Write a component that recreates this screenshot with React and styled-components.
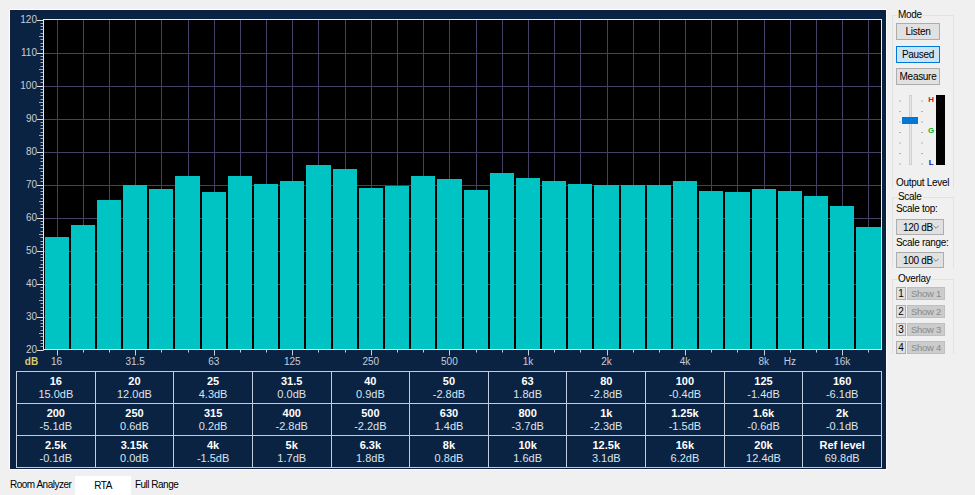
import React from "react";
import styled, { createGlobalStyle } from "styled-components";

const GlobalStyle = createGlobalStyle`
  body {
    margin: 0;
    background: #f0f0f0;
    font-family: "Liberation Sans", Arial, sans-serif;
    font-size: 10px;
    color: #000;
  }
`;

const NAVY = "#0b2343";
const BAR = "#00c4c4";
const GRID = "#463f63";
const AXIS_TEXT = "#c6cdd8";

const bars = [
  54.0, 57.6, 65.4, 69.8, 68.7, 72.5, 67.8, 72.5, 70.1, 71.0, 75.8, 74.8, 68.9,
  69.5, 72.5, 71.7, 68.2, 73.4, 72.0, 71.0, 70.3, 69.9, 69.7, 69.7, 71.0, 68.0,
  67.7, 68.7, 68.0, 66.6, 63.4, 57.1,
];

const xLabels = {
  0: "16", 3: "31.5", 6: "63", 9: "125", 12: "250", 15: "500",
  18: "1k", 21: "2k", 24: "4k", 27: "8k", 30: "16k",
};

const tableRows = [
  [["16", "15.0dB"], ["20", "12.0dB"], ["25", "4.3dB"], ["31.5", "0.0dB"], ["40", "0.9dB"], ["50", "-2.8dB"], ["63", "1.8dB"], ["80", "-2.8dB"], ["100", "-0.4dB"], ["125", "-1.4dB"], ["160", "-6.1dB"]],
  [["200", "-5.1dB"], ["250", "0.6dB"], ["315", "0.2dB"], ["400", "-2.8dB"], ["500", "-2.2dB"], ["630", "1.4dB"], ["800", "-3.7dB"], ["1k", "-2.3dB"], ["1.25k", "-1.5dB"], ["1.6k", "-0.6dB"], ["2k", "-0.1dB"]],
  [["2.5k", "-0.1dB"], ["3.15k", "0.0dB"], ["4k", "-1.5dB"], ["5k", "1.7dB"], ["6.3k", "1.8dB"], ["8k", "0.8dB"], ["10k", "1.6dB"], ["12.5k", "3.1dB"], ["16k", "6.2dB"], ["20k", "12.4dB"], ["Ref level", "69.8dB"]],
];

// plot geometry (svg coords)
const PL = 33.5;
const PR = 871.5;
const PT = 9.5;
const PB = 339.5;
const PITCH = (PR - PL) / 32;
const yOf = (v) => PB - (v - 20) * 3.3;

const Window = styled.div`
  width: 975px;
  height: 495px;
  display: flex;
  flex-direction: column;
  overflow: hidden;
`;

const Main = styled.div`
  display: flex;
  padding: 9px 0 0 9px;
`;

const Analyzer = styled.div`
  width: 876px;
  height: 459px;
  background: ${NAVY};
  border: 1px solid #ffffff;
  display: flex;
  flex-direction: column;
`;

const Chart = styled.svg`
  display: block;
  flex: none;
  font-family: "Liberation Sans", Arial, sans-serif;
`;

const Table = styled.div`
  margin-left: 6px;
  width: 866px;
  display: grid;
  grid-template-columns: repeat(11, 1fr);
  border-top: 1px solid #c3ccd8;
  border-left: 1px solid #c3ccd8;
  box-sizing: border-box;
`;

const Cell = styled.div`
  height: 32px;
  box-sizing: border-box;
  border-right: 1px solid #c3ccd8;
  border-bottom: 1px solid #c3ccd8;
  display: flex;
  flex-direction: column;
  align-items: center;
  justify-content: center;
  line-height: 13px;
  font-size: 11px;
`;

const Freq = styled.span`
  color: #ffffff;
  font-weight: bold;
`;

const Level = styled.span`
  color: #dde4ec;
`;

const Side = styled.div`
  width: 62px;
  margin-left: 5px;
  display: flex;
  flex-direction: column;
  letter-spacing: -0.3px;
  white-space: nowrap;
`;

const Group = styled.fieldset`
  margin: ${(p) => p.$mt || 0}px 0 0 0;
  padding: 0 0 0 3px;
  border: 1px solid #e2e2e2;
  border-bottom: none;
  display: flex;
  flex-direction: column;
  min-width: 0;
`;

const Legend = styled.legend`
  padding: 0 1px;
  margin-left: 1px;
  font-size: 10px;
  line-height: 12px;
`;

const Button = styled.div`
  width: 44px;
  height: 17px;
  box-sizing: border-box;
  margin-top: ${(p) => p.$mt || 0}px;
  display: flex;
  align-items: center;
  justify-content: center;
  background: ${(p) => (p.$active ? "#cce4f7" : "#e1e1e1")};
  border: 1px solid ${(p) => (p.$active ? "#0078d7" : "#adadad")};
  font-size: 10px;
`;

const Caption = styled.div`
  margin-top: ${(p) => p.$mt || 0}px;
  font-size: 10px;
  line-height: 12px;
`;

const Combo = styled.div`
  width: 48px;
  height: 16px;
  box-sizing: border-box;
  margin-top: ${(p) => p.$mt || 0}px;
  background: #e1e1e1;
  border: 1px solid #adadad;
  display: flex;
  align-items: center;
  justify-content: space-between;
  padding: 0 4px 0 6px;
  font-size: 10px;
`;

const OverlayRow = styled.div`
  display: flex;
  gap: 1px;
  margin-top: ${(p) => p.$mt || 0}px;
`;

const NumBox = styled.div`
  width: 10px;
  height: 13px;
  box-sizing: border-box;
  background: #e1e1e1;
  border: 1px solid #adadad;
  display: flex;
  align-items: center;
  justify-content: center;
  font-size: 10px;
`;

const ShowBtn = styled.div`
  width: 38px;
  height: 13px;
  box-sizing: border-box;
  background: #cccccc;
  border: 1px solid #bfbfbf;
  color: #8a8a8a;
  display: flex;
  align-items: center;
  justify-content: center;
  font-size: 9.5px;
`;

const Tabs = styled.div`
  display: flex;
  align-items: flex-end;
  padding-left: 8px;
  margin-top: 6px;
  height: 20px;
  letter-spacing: -0.5px;
`;

const Tab = styled.div`
  height: ${(p) => (p.$active ? 19 : 16)}px;
  padding: 0 ${(p) => (p.$active ? 19 : 2)}px;
  margin-bottom: ${(p) => (p.$active ? 0 : 3)}px;
  background: ${(p) => (p.$active ? "#ffffff" : "transparent")};
  display: flex;
  align-items: center;
  font-size: 10px;
  margin-right: 2px;
`;

function ChevronIcon() {
  return (
    <svg width={7} height={4} viewBox="0 0 7 4" style={{ display: "block" }}>
      <polyline points="0.5,0.5 3.5,3.5 6.5,0.5" fill="none" stroke="#707070" strokeWidth={1} />
    </svg>
  );
}

function RtaChart() {
  const hLines = [];
  for (let v = 30; v <= 110; v += 10) hLines.push(v);
  const minor = [];
  for (let v = 20; v <= 120; v += 1) minor.push(v);
  return (
    <Chart width={876} height={361}>
      <rect x={PL} y={PT} width={PR - PL} height={PB - PT} fill="#000" />
      {hLines.map((v) => (
        <line key={v} x1={PL} x2={PR} y1={Math.round(yOf(v)) + 0.5} y2={Math.round(yOf(v)) + 0.5} stroke={GRID} />
      ))}
      {bars.map((_, i) => {
        const x = Math.round(PL + (i + 0.5) * PITCH) + 0.5;
        return <line key={i} x1={x} x2={x} y1={PT} y2={PB} stroke={GRID} />;
      })}
      {bars.map((v, i) => {
        const x0 = Math.round(PL + i * PITCH) + 1;
        const x1 = Math.round(PL + (i + 1) * PITCH) - 1;
        const y = Math.round(yOf(v));
        return <rect key={i} x={x0} y={y} width={x1 - x0} height={PB - y} fill={BAR} />;
      })}
      <rect x={PL} y={PT} width={PR - PL} height={PB - PT} fill="none" stroke="#e8ecf2" />
      {minor.map((v) => (
        <line key={v} x1={v % 5 === 0 ? 29 : 30.5} x2={PL} y1={Math.round(yOf(v)) + 0.5} y2={Math.round(yOf(v)) + 0.5} stroke="#c8d0dc" strokeWidth={0.8} />
      ))}
      {[20, 30, 40, 50, 60, 70, 80, 90, 100, 110, 120].map((v) => (
        <g key={v}>
          <line x1={27} x2={PL} y1={Math.round(yOf(v)) + 0.5} y2={Math.round(yOf(v)) + 0.5} stroke="#dfe5ee" />
          <text x={27} y={yOf(v) + 3.5} textAnchor="end" fontSize={10} fill={AXIS_TEXT}>
            {v}
          </text>
        </g>
      ))}
      {bars.map((_, i) => {
        const x = Math.round(PL + (i + 0.5) * PITCH) + 0.5;
        const big = xLabels[i] !== undefined;
        return <line key={i} x1={x} x2={x} y1={PB} y2={PB + (big ? 6 : 3)} stroke="#c8d0dc" />;
      })}
      {Object.entries(xLabels).map(([i, t]) => (
        <text key={i} x={PL + (Number(i) + 0.5) * PITCH} y={355} textAnchor="middle" fontSize={10} fill={AXIS_TEXT}>
          {t}
        </text>
      ))}
      <text x={PL + 28.5 * PITCH} y={355} textAnchor="middle" fontSize={10} fill={AXIS_TEXT}>
        Hz
      </text>
      <text x={21.5} y={355} textAnchor="middle" fontSize={10} fontWeight="bold" fill="#d6cc6c">
        dB
      </text>
    </Chart>
  );
}

function LevelMeter() {
  const ticks = [0, 1, 2, 3, 4, 5, 6];
  return (
    <svg width={56} height={74} style={{ display: "block", marginTop: 8 }}>
      {ticks.map((t) => (
        <g key={t}>
          <line x1={3} x2={5} y1={8 + t * 10.5} y2={8 + t * 10.5} stroke="#b0b0b0" />
          <line x1={25} x2={27} y1={8 + t * 10.5} y2={8 + t * 10.5} stroke="#b0b0b0" />
        </g>
      ))}
      <rect x={13.5} y={2.5} width={2} height={69} fill="#e7e7e7" stroke="#d0d0d0" />
      <rect x={6} y={24} width={16} height={7} fill="#0078d7" />
      <rect x={40} y={2} width={9} height={70} fill="#000" />
      <text x={35} y={9} fontSize={8} fontWeight="bold" fill="#e01010" textAnchor="middle">H</text>
      <text x={35} y={40} fontSize={8} fontWeight="bold" fill="#10b010" textAnchor="middle">G</text>
      <text x={35} y={72} fontSize={8} fontWeight="bold" fill="#1010b0" textAnchor="middle">L</text>
    </svg>
  );
}

export default function App() {
  return (
    <>
      <GlobalStyle />
      <Window>
        <Main>
          <Analyzer>
            <RtaChart />
            <Table>
              {tableRows.flat().map(([f, l], i) => (
                <Cell key={i}>
                  <Freq>{f}</Freq>
                  <Level>{l}</Level>
                </Cell>
              ))}
            </Table>
          </Analyzer>
          <Side>
            <Group>
              <Legend>Mode</Legend>
              <Button $mt={2}>Listen</Button>
              <Button $mt={6} $active>Paused</Button>
              <Button $mt={5}>Measure</Button>
              <LevelMeter />
              <Caption $mt={10}>Output Level</Caption>
            </Group>
            <Group $mt={2}>
              <Legend>Scale</Legend>
              <Caption>Scale top:</Caption>
              <Combo $mt={4}>120 dB <ChevronIcon /></Combo>
              <Caption $mt={2}>Scale range:</Caption>
              <Combo $mt={3}>100 dB <ChevronIcon /></Combo>
            </Group>
            <Group $mt={5}>
              <Legend>Overlay</Legend>
              {[1, 2, 3, 4].map((n) => (
                <OverlayRow key={n} $mt={n === 1 ? 2 : 5}>
                  <NumBox>{n}</NumBox>
                  <ShowBtn>Show {n}</ShowBtn>
                </OverlayRow>
              ))}
            </Group>
          </Side>
        </Main>
        <Tabs>
          <Tab>Room Analyzer</Tab>
          <Tab $active>RTA</Tab>
          <Tab>Full Range</Tab>
        </Tabs>
      </Window>
    </>
  );
}
